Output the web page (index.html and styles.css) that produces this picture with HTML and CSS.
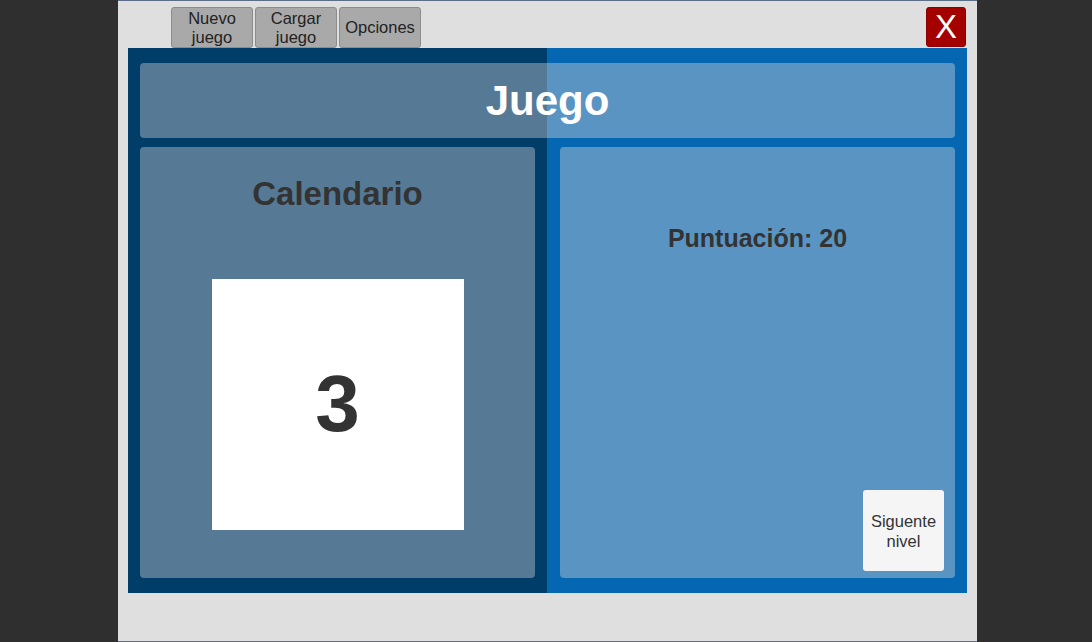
FILE: index.html
```html
<!DOCTYPE html>
<html lang="es">
<head>
<meta charset="utf-8">
<title>Juego</title>
<link rel="stylesheet" href="styles.css">
</head>
<body>
<div class="screen">
  <div class="window">
    <div class="toolbar">
      <div class="menu">
        <button class="tool-btn">Nuevo<br>juego</button>
        <button class="tool-btn">Cargar<br>juego</button>
        <button class="tool-btn">Opciones</button>
      </div>
      <button class="close-btn">X</button>
    </div>
    <div class="game">
      <div class="panel title-panel">Juego</div>
      <div class="columns">
        <div class="panel cal-panel">
          <div class="cal-title">Calendario</div>
          <div class="cal-box">3</div>
        </div>
        <div class="panel score-panel">
          <div class="score">Puntuación: 20</div>
          <button class="next-btn">Siguente<br>nivel</button>
        </div>
      </div>
    </div>
  </div>
</div>
</body>
</html>
```
FILE: styles.css
```css
* { box-sizing: border-box; }
html, body { margin: 0; padding: 0; }
body {
  background: #2f2f2f;
  font-family: "Liberation Sans", Arial, sans-serif;
  width: 1092px;
  height: 642px;
  overflow: hidden;
}
.screen {
  display: flex;
  padding-left: 118px;
  height: 642px;
}
.window {
  width: 859px;
  height: 642px;
  background: #dfdfdf;
  border-top: 1px solid #5d6f86;
  border-bottom: 1px solid #5d6f86;
  display: flex;
  flex-direction: column;
}
.toolbar {
  height: 47px;
  display: flex;
  justify-content: space-between;
  align-items: flex-start;
  padding: 6px 11px 0 53px;
}
.menu { display: flex; gap: 2px; }
.tool-btn {
  width: 82px;
  height: 41px;
  background: #a9a9a9;
  border: 1px solid #8c8c8c;
  border-radius: 3px;
  font-family: "Liberation Sans", Arial, sans-serif;
  font-size: 16.5px;
  line-height: 19px;
  color: #222;
  padding: 0;
  text-align: center;
}
.close-btn {
  width: 40px;
  height: 40px;
  background: #a50000;
  border: 1px solid #8a0000;
  border-radius: 3px;
  color: #fff;
  font-family: "Liberation Sans", Arial, sans-serif;
  font-size: 33px;
  line-height: 38px;
  padding: 0;
  text-align: center;
}
.game {
  margin-left: 10px;
  width: 839px;
  height: 545px;
  background: linear-gradient(to right, #003d69 0, #003d69 419px, #0566b2 419px, #0566b2 100%);
  padding: 15px 12px 15px 12px;
  display: flex;
  flex-direction: column;
  gap: 9px;
}
.panel {
  background: rgba(232, 228, 224, 0.37);
  border-radius: 4px;
}
.title-panel {
  height: 75px;
  display: flex;
  align-items: center;
  justify-content: center;
  color: #fff;
  font-weight: bold;
  font-size: 42px;
}
.columns {
  display: grid;
  grid-template-columns: 395px 395px;
  gap: 25px;
  height: 431px;
}
.cal-panel {
  display: flex;
  flex-direction: column;
  align-items: center;
  padding-top: 27px;
}
.cal-title {
  font-size: 33px;
  font-weight: bold;
  color: #333;
  line-height: 40px;
}
.cal-box {
  margin-top: 65px;
  width: 252px;
  height: 251px;
  background: #fff;
  display: flex;
  align-items: center;
  justify-content: center;
  font-size: 80px;
  font-weight: bold;
  color: #333;
  padding-bottom: 2px;
}
.score-panel {
  display: flex;
  flex-direction: column;
  align-items: center;
  padding: 76px 11px 7px 0;
}
.score {
  font-size: 25px;
  font-weight: bold;
  color: #333;
  line-height: 30px;
  padding-left: 11px;
}
.next-btn {
  margin-top: auto;
  align-self: flex-end;
  width: 81px;
  height: 81px;
  background: #f5f5f5;
  border: none;
  border-radius: 3px;
  font-family: "Liberation Sans", Arial, sans-serif;
  font-size: 16.5px;
  line-height: 20px;
  color: #333;
  padding: 0;
  text-align: center;
}
```
